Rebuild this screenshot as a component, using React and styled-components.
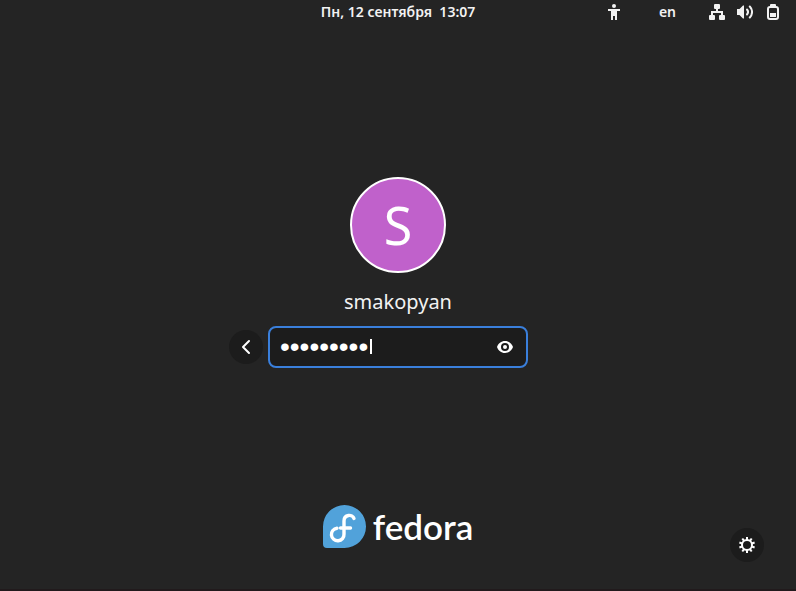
import React, { useState } from "react";
import styled, { createGlobalStyle } from "styled-components";

const GlobalStyle = createGlobalStyle`
  *, *::before, *::after { box-sizing: border-box; }
  body {
    margin: 0;
    background: #242424;
    color: #f2f2f2;
    font-family: "Noto Sans", "Open Sans", sans-serif;
  }
  button, input { font: inherit; color: inherit; margin: 0; }
`;

const Screen = styled.div`
  display: flex;
  flex-direction: column;
  min-height: 100vh;
  background: #242424;
  border-bottom: 2px solid #211a1c;
`;

const TopBar = styled.header`
  display: grid;
  grid-template-columns: 1fr auto 1fr;
  align-items: center;
  height: 24px;
  font-size: 14px;
  line-height: 24px;
  font-weight: 600;
`;

const BarButton = styled.button`
  display: flex;
  align-items: center;
  gap: ${(p) => p.$gap || 0}px;
  height: 24px;
  padding: 0;
  border: 0;
  background: none;
  white-space: pre;
  line-height: 24px;
  svg { display: block; }
`;

const Clock = styled(BarButton)`
  grid-column: 2;
`;

const StatusArea = styled.div`
  display: flex;
  justify-content: flex-end;
  align-items: center;
  padding-right: 15px;
`;

const Language = styled(BarButton)`
  margin: 0 33px 0 37px;
`;

const Login = styled.main`
  flex: 1;
  display: flex;
  flex-direction: column;
  align-items: center;
  justify-content: center;
  padding-top: 16px;
`;

const Avatar = styled.div`
  display: grid;
  place-items: center;
  width: 96px;
  height: 96px;
  border: 2px solid #ffffff;
  border-radius: 50%;
  background: #c061cb;
  color: #ffffff;
  font-size: 52px;
  line-height: 92px;
`;

const UserName = styled.h1`
  margin: 14px 0 9px;
  font-size: 20px;
  line-height: 30px;
  font-weight: 400;
`;

const PasswordRow = styled.form`
  display: grid;
  grid-template-columns: 34px minmax(0, 260px) 34px;
  justify-content: center;
  align-items: center;
  gap: 5px;
  width: 100%;
`;

const RoundButton = styled.button`
  display: grid;
  place-items: center;
  width: 34px;
  height: 34px;
  padding: 0;
  border: 0;
  border-radius: 50%;
  background: #1c1c1c;
  color: #ffffff;
`;

const Field = styled.div`
  position: relative;
  display: flex;
  align-items: center;
  height: 42px;
  padding: 0 13px 0 10px;
  border: 2px solid #3a7fdb;
  border-radius: 8px;
  background: #1c1c1c;
`;

const PasswordInput = styled.input`
  flex: 1;
  min-width: 0;
  height: 38px;
  padding: 0;
  border: 0;
  outline: 0;
  background: none;
  color: #ffffff;
  font-family: "Liberation Sans", Arial, sans-serif;
  font-size: 28px;
  caret-color: transparent;
`;

const Caret = styled.span`
  position: absolute;
  left: 100px;
  top: 11px;
  width: 2px;
  height: 15px;
  background: #ffffff;
`;

const RevealButton = styled(BarButton)`
  color: #ffffff;
`;

const Footer = styled.footer`
  display: grid;
  grid-template-columns: 1fr auto 1fr;
  height: 84px;
  padding-bottom: 27px;
`;

const Brand = styled.div`
  grid-column: 2;
  display: flex;
  align-items: center;
  align-self: start;
  gap: 7px;
  height: 43px;
  color: #ffffff;
`;

const Wordmark = styled.span`
  font-family: Lato, "Noto Sans", sans-serif;
  font-size: 35px;
  line-height: 43px;
  font-weight: 600;
`;

const SettingsButton = styled(RoundButton)`
  justify-self: end;
  align-self: end;
  margin-right: 32px;
`;

const teeth = [0, 36, 72, 108, 144, 180, 216, 252, 288, 324];

const AccessibilityIcon = () => (
  <svg width="16" height="16" viewBox="0 0 16 16" fill="currentColor" aria-hidden="true">
    <circle cx="8" cy="2" r="2" />
    <path d="M2 5h12v2h-3v9H9v-4H7v4H5V7H2z" />
  </svg>
);

const NetworkIcon = () => (
  <svg width="16" height="16" viewBox="0 0 16 16" fill="currentColor" aria-hidden="true">
    <rect x="5" y="0" width="6" height="5" rx="1" />
    <path d="M7 4h2v3h5v4h-2V9H4v2H2V7h5z" />
    <rect x="0" y="11" width="6" height="5" rx="1" />
    <rect x="10" y="11" width="6" height="5" rx="1" />
  </svg>
);

const VolumeIcon = () => (
  <svg width="16" height="16" viewBox="0 0 16 16" fill="none" stroke="currentColor" strokeLinecap="round" aria-hidden="true">
    <path d="M0 5h2.500L6 1.500h1v13H6L2.500 11H0z" fill="currentColor" stroke="none" />
    <path d="M10 5.500c1.300 1.500 1.300 3.500 0 5" strokeWidth="2" />
    <path d="M12.800 2.500c3 3.200 3 7.800 0 11" strokeWidth="2" />
  </svg>
);

const BatteryIcon = () => (
  <svg width="16" height="16" viewBox="0 0 16 16" aria-hidden="true">
    <path d="M5 2V1q0-1 1-1h4q1 0 1 1v1z" fill="currentColor" />
    <rect x="3" y="3" width="10" height="12" rx="2" fill="none" stroke="currentColor" strokeWidth="2" />
    <rect x="5" y="9" width="6" height="4" fill="currentColor" />
  </svg>
);

const BackIcon = () => (
  <svg width="16" height="16" viewBox="0 0 16 16" fill="none" stroke="currentColor" strokeWidth="2" strokeLinecap="round" strokeLinejoin="round" aria-hidden="true">
    <path d="M11 2L5 8l6 6" />
  </svg>
);

const EyeIcon = () => (
  <svg width="16" height="16" viewBox="0 0 16 16" fill="currentColor" fillRule="evenodd" aria-hidden="true">
    <path d="M8 2C4.200 2 1.200 4.500 0 8c1.200 3.500 4.200 6 8 6s6.800-2.500 8-6c-1.200-3.500-4.200-6-8-6zm0 2a4 4 0 1 1 0 8 4 4 0 0 1 0-8z" />
    <circle cx="8" cy="8" r="2" />
  </svg>
);

const GearIcon = () => (
  <svg width="16" height="16" viewBox="0 0 16 16" stroke="currentColor" aria-hidden="true">
    <circle cx="8" cy="8" r="5" fill="none" strokeWidth="2" />
    {teeth.map((angle) => (
      <path key={angle} d="M8 0v3" strokeWidth="2" transform={`rotate(${angle} 8 8)`} />
    ))}
  </svg>
);

const FedoraMark = () => (
  <svg width="43" height="43" viewBox="0 0 43 43" fill="none" aria-hidden="true">
    <path d="M21.500 0A21.500 21.500 0 0 1 21.500 43H4Q0 43 0 39V21.500A21.500 21.500 0 0 1 21.500 0z" fill="#51a2da" />
    <g stroke="#ffffff" strokeWidth="3.400" strokeLinecap="round" strokeLinejoin="round">
      <path d="M31 13.500C29.500 8.800 21 9.300 21 16V29A6.300 6.300 0 1 1 14 23.200" />
      <path d="M17.500 23H27.500" />
    </g>
  </svg>
);

export default function App() {
  const [password, setPassword] = useState("123456789");
  const [visible, setVisible] = useState(false);

  return (
    <>
      <GlobalStyle />
      <Screen>
        <TopBar>
          <Clock type="button">{"Пн, 12 сентября  13:07"}</Clock>
          <StatusArea>
            <BarButton type="button" aria-label="Accessibility"><AccessibilityIcon /></BarButton>
            <Language type="button">en</Language>
            <BarButton type="button" $gap={12} aria-label="System status">
              <NetworkIcon />
              <VolumeIcon />
              <BatteryIcon />
            </BarButton>
          </StatusArea>
        </TopBar>
        <Login>
          <Avatar aria-hidden="true">S</Avatar>
          <UserName>smakopyan</UserName>
          <PasswordRow onSubmit={(e) => e.preventDefault()}>
            <RoundButton type="button" aria-label="Back"><BackIcon /></RoundButton>
            <Field>
              <PasswordInput
                type={visible ? "text" : "password"}
                aria-label="Password"
                autoComplete="off"
                value={password}
                onChange={(e) => setPassword(e.target.value)}
              />
              <Caret />
              <RevealButton type="button" aria-label="Show password" onClick={() => setVisible(!visible)}>
                <EyeIcon />
              </RevealButton>
            </Field>
          </PasswordRow>
        </Login>
        <Footer>
          <Brand>
            <FedoraMark />
            <Wordmark>fedora</Wordmark>
          </Brand>
          <SettingsButton type="button" aria-label="Session settings"><GearIcon /></SettingsButton>
        </Footer>
      </Screen>
    </>
  );
}
